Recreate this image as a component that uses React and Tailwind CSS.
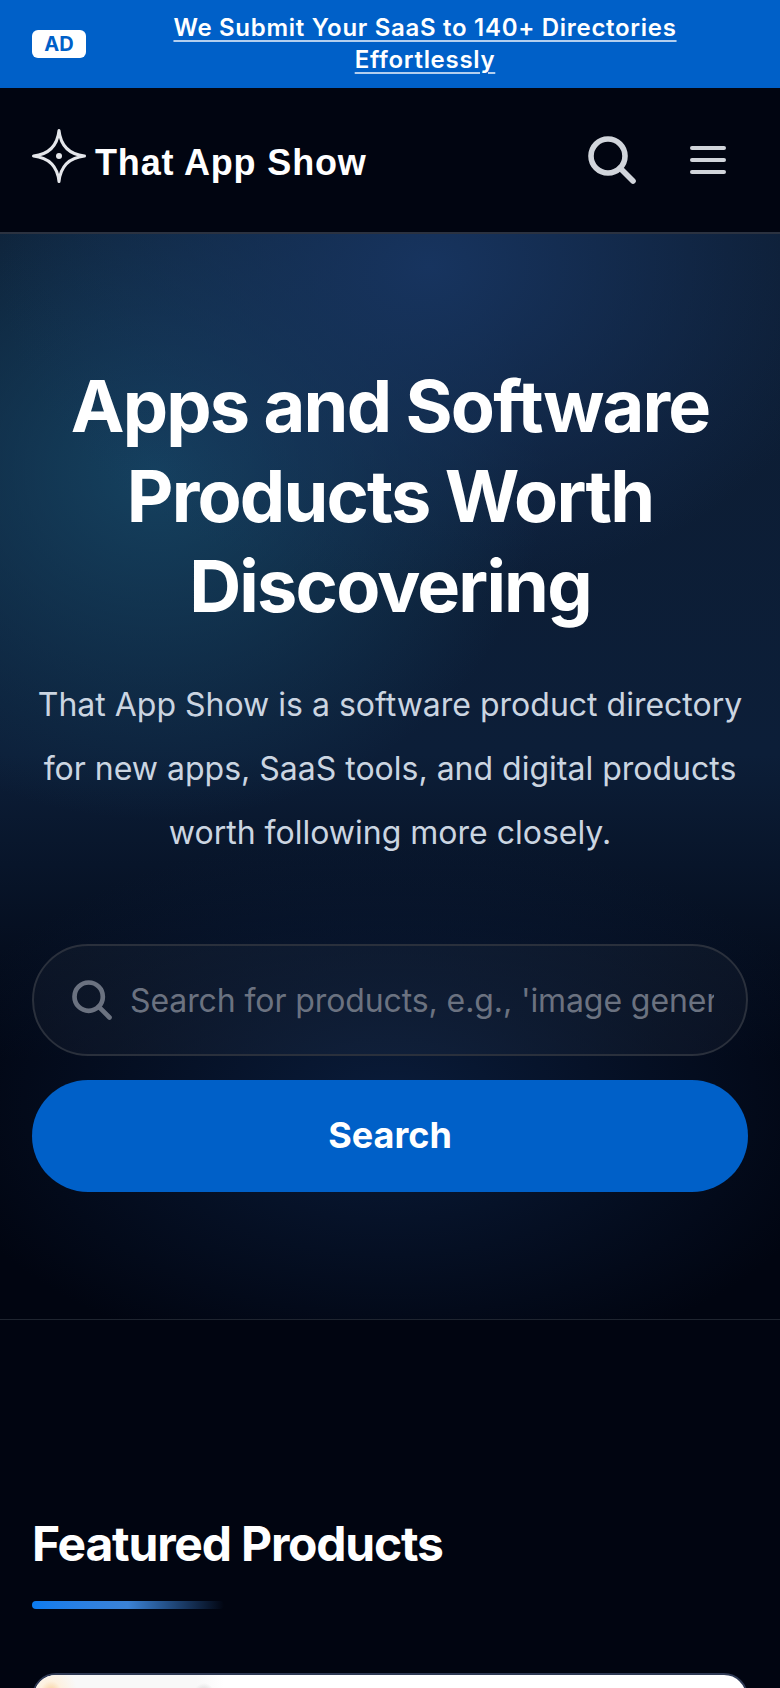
import React from "react";

const Logo = () => (
  <svg width="54" height="54" viewBox="0 0 54 54" fill="none" className="-mt-[8px]">
    <path
      d="M27 1.5 Q29.5 24.5 52.5 27 Q29.5 29.5 27 52.5 Q24.5 29.5 1.5 27 Q24.5 24.5 27 1.5 Z"
      stroke="#e5e7eb"
      strokeWidth="3"
      strokeLinejoin="round"
    />
    <circle cx="27" cy="27" r="3" fill="#e5e7eb" />
  </svg>
);

const SearchIcon = ({ size, className }) => (
  <svg
    width={size}
    height={size}
    viewBox="0 0 48 48"
    fill="none"
    stroke="currentColor"
    strokeWidth="5.6"
    strokeLinecap="round"
    className={className}
  >
    <circle cx="20" cy="20" r="17" />
    <path d="M32 32 L45 45" />
  </svg>
);

export default function App() {
  return (
    <div className="h-[1688px] bg-[#010511] overflow-hidden font-['Inter',sans-serif] text-white">
      {/* Ad bar */}
      <div className="h-[88px] bg-[#0060c8] px-8 flex items-center">
        <span className="w-[54px] h-7 shrink-0 rounded-md bg-white text-[#0060c8] text-[20px] font-bold flex items-center justify-center">
          AD
        </span>
        <a className="ml-4 flex-1 text-center text-[24px] leading-8 font-semibold tracking-[0.7px] underline underline-offset-4 decoration-white/70 decoration-2 px-8">
          We Submit Your SaaS to 140+ Directories Effortlessly
        </a>
      </div>

      {/* Header */}
      <header className="h-[146px] px-8 flex items-center border-b-2 border-[#2b3240]">
        <Logo />
        <span className="ml-[9px] mt-[6px] text-[36px] font-bold font-['Liberation_Sans',sans-serif] tracking-[0.85px]">
          That App Show
        </span>
        <div className="ml-auto flex items-center gap-[54px] pr-[22px] text-[#d1d5db]">
          <SearchIcon size={48} />
          <div className="flex flex-col gap-2">
            <span className="w-9 h-1 rounded-full bg-[#d1d5db]" />
            <span className="w-9 h-1 rounded-full bg-[#d1d5db]" />
            <span className="w-9 h-1 rounded-full bg-[#d1d5db]" />
          </div>
        </div>
      </header>

      {/* Hero */}
      <section className="h-[1086px] px-8 pt-[127px] border-b border-[#1f2530] text-center bg-[radial-gradient(ellipse_55%_30%_at_55%_3%,#17345f_0%,transparent_100%),radial-gradient(ellipse_50%_32%_at_20%_22%,#15415f_0%,transparent_100%),radial-gradient(ellipse_60%_25%_at_50%_80%,#0a1c3a_0%,transparent_100%),linear-gradient(#0d1d33_0%,#0c1e38_48%,#010511_76%)]">
        <h1 className="text-[72px] leading-[90px] font-bold tracking-[-1.8px]">
          Apps and Software Products Worth Discovering
        </h1>
        <p className="mt-[42px] text-[32px] leading-[64px] text-[#cbd5e1]">
          That App Show is a software product directory for new apps, SaaS tools, and digital products worth following more closely.
        </p>
        <div className="mt-[79px] h-[112px] rounded-full border-2 border-[#2a303c] bg-white/[0.03] flex items-center pl-[38px] pr-[32px]">
          <SearchIcon size={40} className="text-[#6b7280] shrink-0" />
          <input
            readOnly
            placeholder="Search for products, e.g., 'image generator'"
            className="ml-[18px] pt-px flex-1 min-w-0 bg-transparent outline-none text-[32px] tracking-[-0.1px] placeholder:text-[#6b7280]"
          />
        </div>
        <button className="mt-6 w-full h-[112px] pb-0.5 rounded-full bg-[#0060c8] text-[36px] font-bold">
          Search
        </button>
      </section>

      {/* Featured */}
      <section className="px-8 pt-[196px]">
        <h2 className="text-[48px] leading-[56px] font-bold tracking-[-1.2px]">Featured Products</h2>
        <div className="mt-[29px] w-[192px] h-2 rounded-full bg-gradient-to-r from-[#0a7cf0] via-[#3b82d6] to-transparent" />
        <div className="mt-[64px] h-40 rounded-t-[24px] border-2 border-[#2f3a55] bg-white overflow-hidden">
          <div className="h-full w-[190px] bg-[radial-gradient(circle_at_17px_16px,#f8d2a0_0%,#fdf1e0_10px,transparent_26px),radial-gradient(circle_at_170px_18px,#d4d4d4_0%,transparent_10px),linear-gradient(to_right,#f8f8f8_85%,#ffffff)]" />
        </div>
      </section>
    </div>
  );
}
